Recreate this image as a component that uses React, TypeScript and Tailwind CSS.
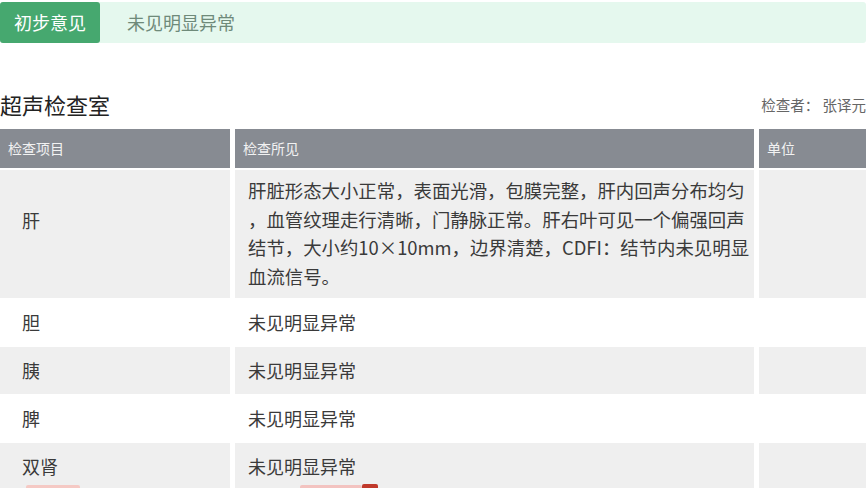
import React from "react";

const font = { fontFamily: '"Noto Sans CJK SC", "Noto Sans", sans-serif' };

function Row({ name, value, gray }: { name: string; value: string; gray: boolean }) {
  const bg = gray ? "bg-[#efefef]" : "bg-white";
  return (
    <div className="flex gap-[5px] h-[47px] mb-[1px]">
      <div className={`w-[230px] ${bg} flex items-center pl-[22px] text-[18px] text-[#3a3a3a]`}>{name}</div>
      <div className={`w-[519px] ${bg} flex items-center pl-[13px] text-[18px] text-[#3a3a3a]`}>{value}</div>
      <div className={`w-[107px] ${bg}`}></div>
    </div>
  );
}

export default function App() {
  return (
    <div className="w-[868px] h-[488px] overflow-hidden bg-white relative" style={font}>
      <div className="flex h-[46px] pt-[2px]">
        <div className="flex h-[41px] w-[866px] bg-[#e5f8ee] rounded-[3px] items-center">
          <div className="w-[100px] h-[41px] bg-[#46a86f] rounded-[3px] flex items-center justify-center text-white text-[18px]">
            初步意见
          </div>
          <div className="pl-[27px] text-[18px] text-[#6f8a7a]">未见明显异常</div>
        </div>
      </div>
      <div className="flex items-end justify-between h-[76px] pb-[4px]">
        <div className="text-[22px] text-[#222] leading-[28px]">超声检查室</div>
        <div className="text-[14.5px] text-[#666] leading-[20px] pr-[2px] pb-[3px]">检查者：&nbsp;张译元</div>
      </div>
      <div className="flex gap-[5px] h-[39px] mt-[7px] mb-[2px]">
        <div className="w-[230px] bg-[#878b92] flex items-center pl-[8px] text-[14px] text-[#f2f2f2]">检查项目</div>
        <div className="w-[519px] bg-[#878b92] flex items-center pl-[8px] text-[14px] text-[#f2f2f2]">检查所见</div>
        <div className="w-[107px] bg-[#878b92] flex items-center pl-[8px] text-[14px] text-[#f2f2f2]">单位</div>
      </div>
      <div className="flex gap-[5px] h-[128px] mb-[1px]">
        <div className="w-[230px] bg-[#efefef] pl-[22px] pt-[36px] text-[18px] text-[#3a3a3a] leading-[29px]">肝</div>
        <div className="w-[519px] bg-[#efefef] pl-[13px] pt-[6px] text-[18.4px] text-[#3a3a3a] leading-[28.7px]">
          <div>肝脏形态大小正常，表面光滑，包膜完整，肝内回声分布均匀</div>
          <div>，血管纹理走行清晰，门静脉正常。肝右叶可见一个偏强回声</div>
          <div>结节，大小约10×10mm，边界清楚，CDFI：结节内未见明显</div>
          <div>血流信号。</div>
        </div>
        <div className="w-[107px] bg-[#efefef]"></div>
      </div>
      <Row name="胆" value="未见明显异常" gray={false} />
      <Row name="胰" value="未见明显异常" gray={true} />
      <Row name="脾" value="未见明显异常" gray={false} />
      <Row name="双肾" value="未见明显异常" gray={true} />
      <div className="absolute left-[26px] bottom-0 w-[54px] h-[3px] bg-[#f5c9c4] rounded-t-[2px]"></div>
      <div className="absolute left-[300px] bottom-0 w-[62px] h-[3px] bg-[#f3c3c0] rounded-t-[2px]"></div>
      <div className="absolute left-[362px] bottom-0 w-[16px] h-[4px] bg-[#c0392b] rounded-t-[2px]"></div>
    </div>
  );
}
